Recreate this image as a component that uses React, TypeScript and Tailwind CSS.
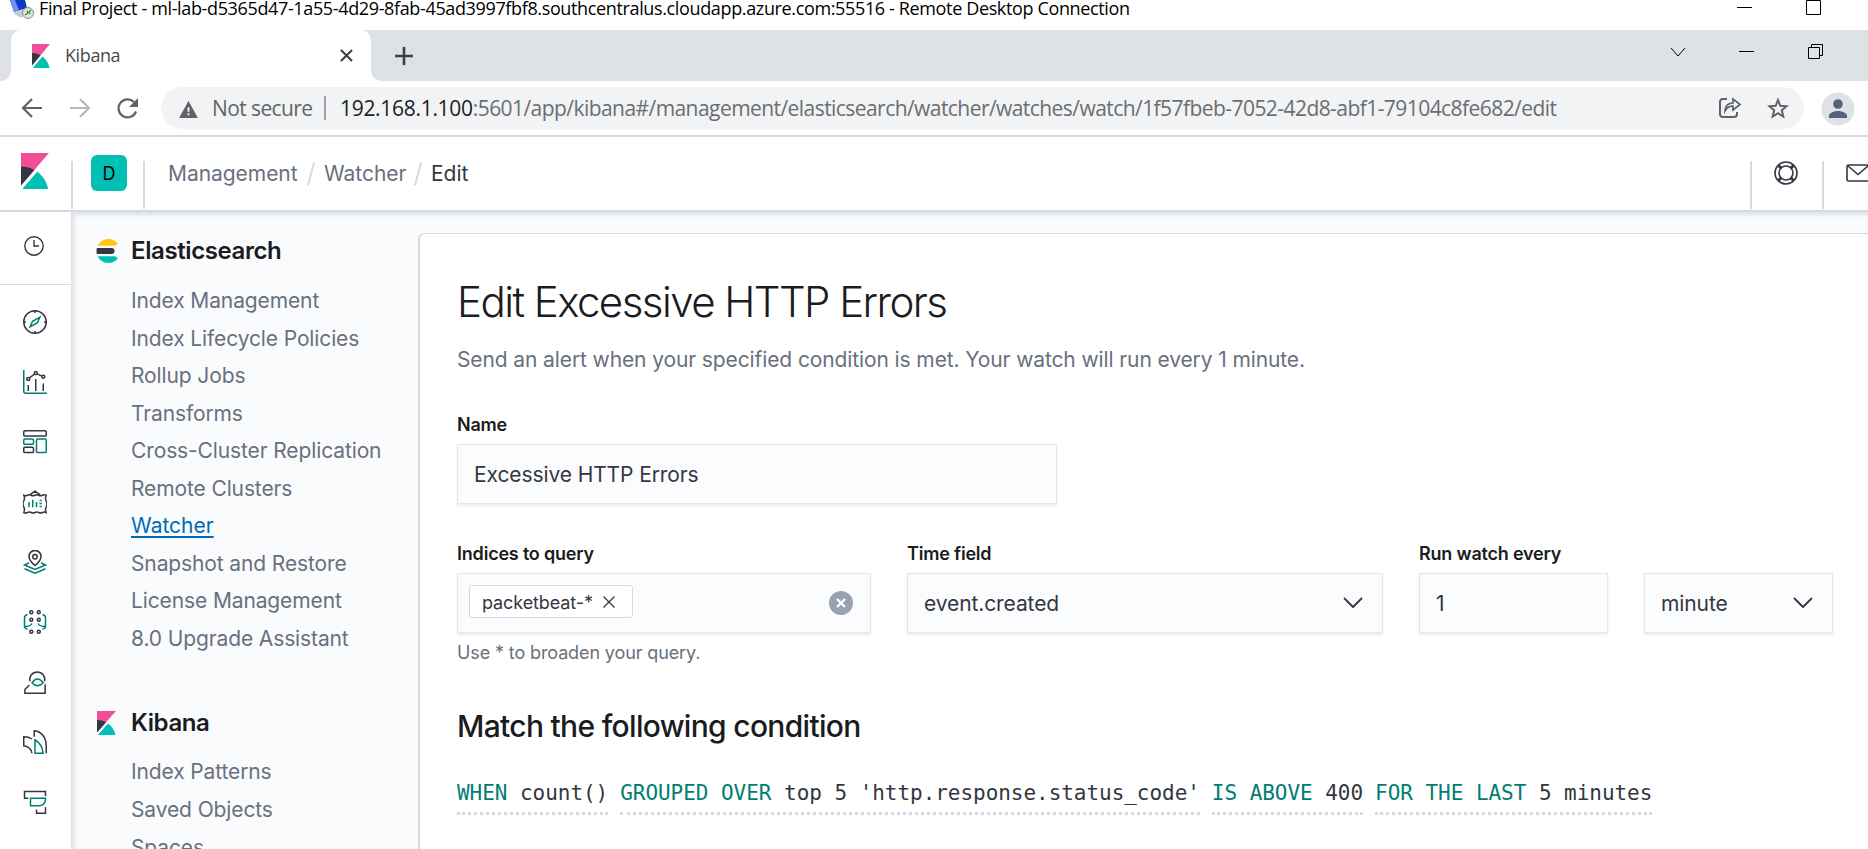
import React from "react";

type P = { className?: string };

const KibanaLogo = ({ className }: P) => (
  <svg viewBox="4 0 25 32" preserveAspectRatio="none" className={className} fill="none">
    <path fill="#F04E98" d="M4 0v28.789L28.935.017z" />
    <path fill="#343741" d="M4 12v16.789l11.906-13.738A24.721 24.721 0 004 12" />
    <path fill="#00BFB3" d="M18.479 16.664L6.268 30.754l-1.073 1.237h23.191c-1.252-6.292-4.883-11.719-9.908-15.327" />
  </svg>
);

const ElasticsearchLogo = ({ className }: P) => (
  <svg viewBox="0 0 32 32" className={className}>
    <path fill="#343741" d="M2 16c0 1.384.194 2.72.524 4H22a4 4 0 000-8H2.524A15.984 15.984 0 002 16" />
    <path fill="#FEC514" d="M28.924 7.662A15.381 15.381 0 0030.48 6C27.547 2.346 23.05 0 18 0 11.679 0 6.239 3.678 3.644 9H25.51a5.039 5.039 0 003.413-1.338" />
    <path fill="#00BFB3" d="M25.51 23H3.645C6.24 28.323 11.679 32 18 32c5.05 0 9.547-2.346 12.48-6a15.381 15.381 0 00-1.556-1.662A5.034 5.034 0 0025.51 23" />
  </svg>
);

const Rail = ({ children }: { children: React.ReactNode }) => (
  <div className="flex h-[60px] items-center justify-center">
    <svg viewBox="0 0 32 32" className="h-6 w-6" fill="none" stroke="#343741" strokeWidth="2">
      {children}
    </svg>
  </div>
);
const T = "#017D73";

const railIcons = [
  <>
    <circle cx="16" cy="16" r="15" />
    <path d="M16 1v3M16 28v3M1 16h3M28 16h3" />
    <path stroke={T} d="M9.500 22.500l3.200-7.500L22.500 9.500l-3.200 7.500z" />
  </>,
  <>
    <path stroke={T} d="M1 0v28a3 3 0 003 3h28" />
    <path d="M7 20v8M17 12v16M27 18v10M8.700 10.600l6.600-5M18.800 5.200l6.400 3" />
    <circle cx="7" cy="12" r="2" />
    <circle cx="17" cy="4" r="2" />
    <circle cx="27" cy="9" r="2" />
  </>,
  <>
    <rect x="1" y="1" width="30" height="7" rx="1.500" />
    <rect stroke={T} x="1" y="12" width="13" height="7" rx="1.500" />
    <rect stroke={T} x="18" y="12" width="13" height="18" rx="1.500" />
    <rect x="1" y="23" width="13" height="7" rx="1.500" />
  </>,
  <>
    <path d="M1 7q2.500 1.500 5 0t5 0 5 0 5 0 5 0 5 0q-2 4 0 7.700t0 7.700 0 7.600q-2.500-1.500-5 0t-5 0-5 0-5 0-5 0-5 0q2-4 0-7.600t0-7.700 0-7.700zM9 6.500L16 1.500l7 5" />
    <path stroke={T} d="M8 16v7M13 13v10M18 16v7M22 14h3M22 18h3M22 22h3" />
  </>,
  <>
    <path d="M16 20.500S8 14 8 8.500a8 8 0 0116 0C24 14 16 20.500 16 20.500z" />
    <circle cx="16" cy="9" r="3" />
    <path stroke={T} d="M8 17l-6 3 14 6 14-6-6-3M2 25l14 6 14-6" />
  </>,
  <>
    <circle cx="11" cy="3" r="2" />
    <circle cx="21" cy="3" r="2" />
    <circle cx="11" cy="13" r="2" />
    <circle cx="21" cy="13" r="2" />
    <circle cx="11" cy="29" r="2" />
    <circle cx="21" cy="29" r="2" />
    <path stroke={T} d="M6 6q-4 1-4 5v12l4 3M2 22q8 0 10-4M26 6q4 1 4 5v12l-4 3M30 22q-8 0-10-4" />
  </>,
  <>
    <path d="M9.300 15a10 10 0 1119.400 0M8.500 20l-6 6v5h27V19" />
    <path stroke={T} d="M12 17q7-10 15 0-8 8-15 0z" />
  </>,
  <>
    <path d="M12 12C9 10 6 9 1 9v12c6 1 10 4 11 10M15 9V1c10 1 16 9 16 21v9" />
    <path stroke={T} d="M16 13c7 4 10 10 11 18H16z" />
  </>,
  <>
    <path d="M7 11H2V2h28v6M18 26v5h12v-8" />
    <path stroke={T} d="M10 11h20v2q-1 8-9 8H10z" />
  </>,
];

const links = [
  "Index Management",
  "Index Lifecycle Policies",
  "Rollup Jobs",
  "Transforms",
  "Cross-Cluster Replication",
  "Remote Clusters",
  "Watcher",
  "Snapshot and Restore",
  "License Management",
  "8.0 Upgrade Assistant",
];

const NavLink = ({ label }: { label: string }) => (
  <a
    className={
      label === "Watcher"
        ? "block h-[37.550px] text-[21px] leading-[37.550px] text-[#006BB4] underline decoration-2 underline-offset-[3px]"
        : "block h-[37.550px] text-[21px] leading-[37.550px] tracking-[-0.12px] text-[#69707D]"
    }
  >
    {label}
  </a>
);

const Chevron = ({ className }: P) => (
  <svg viewBox="0 0 20 12" className={className} fill="none" stroke="#343741" strokeWidth="1.800" strokeLinecap="round" strokeLinejoin="round">
    <path d="M1.500 1.500L10 10l8.500-8.500" />
  </svg>
);

const box =
  "flex h-[60px] items-center border-[1.500px] border-[#E3E6EF] bg-[#FBFCFD] pt-[2px] text-[21px] tracking-[-0.1px] text-[#343741] shadow-[0_2px_3px_rgba(152,162,179,0.2)]";
const label = "h-[23px] text-[18px] font-semibold leading-[23px] tracking-[-0.2px] text-[#1A1C21]";

const Expr = ({ k, v }: { k: string; v: string }) => (
  <span className="h-[37px] whitespace-pre border-b-[3px] border-dotted border-[#D3DAE6] text-[#343741]">
    <span className="text-[#017D73]">{k}</span> {v}
  </span>
);

export default function App() {
  return (
    <div className="flex h-[849px] w-[1868px] flex-col overflow-hidden bg-white font-['Inter',sans-serif]">
      {/* Remote desktop title bar */}
      <div className="flex h-[30px] shrink-0 items-start font-['Open_Sans',sans-serif] text-black">
        <svg viewBox="0 0 24 20" className="ml-[10px] h-5 w-6">
          <path fill="#1238c9" d="M0 0h15l2 8-13 4z" />
          <path fill="#6f93f3" d="M0 0h5l4 10-5 2z" />
          <path fill="#c9ccd2" d="M3 13l12-4 3 3-7 6z" />
          <circle cx="18" cy="13" r="5.500" fill="#dfe3df" stroke="#8b918b" />
          <path d="M15 15l3-2-1-2M21 10l-2 2 1 2" stroke="#2d9a3a" strokeWidth="1.300" fill="none" />
        </svg>
        <span className="ml-[5px] mt-[-4px] w-[1200px] whitespace-nowrap text-[18px] leading-[25px] tracking-[-0.36px]">
          Final Project - ml-lab-d5365d47-1a55-4d29-8fab-45ad3997fbf8.southcentralus.cloudapp.azure.com:55516 - Remote Desktop Connection
        </span>
        <svg viewBox="0 0 100 16" className="ml-auto mr-[40px] h-4 w-[100px]" fill="none" stroke="#000">
          <path d="M9 7.500h15M78.500 .5h14v14h-14z" />
        </svg>
      </div>

      {/* Tab strip */}
      <div className="flex h-[51px] shrink-0 bg-[#DEE1E6]">
        <div className="flex w-[11px] bg-white">
          <div className="w-full rounded-br-[10px] bg-[#DEE1E6]" />
        </div>
        <div className="flex bg-[#DEE1E6]">
          <div className="flex h-[51px] w-[360px] items-center rounded-t-[10px] bg-white pl-[21px]">
            <KibanaLogo className="h-6 w-[18px]" />
            <span className="ml-[15px] w-[250px] font-['Open_Sans',sans-serif] text-[18px] tracking-[-0.4px] text-[#45494d]">Kibana</span>
            <svg viewBox="0 0 14 14" className="ml-[25px] h-[13px] w-[13px]" stroke="#3c4043" strokeWidth="2.200">
              <path d="M1 1l12 12M13 1L1 13" />
            </svg>
          </div>
        </div>
        <div className="flex w-[11px] bg-white">
          <div className="w-full rounded-bl-[10px] bg-[#DEE1E6]" />
        </div>
        <svg viewBox="0 0 18 18" className="ml-[13px] mt-[17px] h-[18px] w-[18px]" stroke="#3c4043" strokeWidth="2.600">
          <path d="M9 0v18M0 9h18" />
        </svg>
        <svg viewBox="0 0 160 20" className="ml-auto mr-[43px] mt-3 h-5 w-[160px]" fill="none" stroke="#000">
          <path d="M6 6l7 8 7-8M74 9.500h15M143.500 5.500h11v11h-11zM146.500 5.500v-3h11v11h-3" />
        </svg>
      </div>

      {/* Address bar */}
      <div className="flex h-[56px] shrink-0 items-center border-b-2 border-[#DADADA] font-['Open_Sans',sans-serif]">
        <svg viewBox="0 0 120 24" className="ml-5 h-6 w-[120px]" fill="none" stroke="#5F6368" strokeWidth="2.200">
          <path d="M22 12H3M12 3l-9 9 9 9" />
          <path stroke="#B7B9BC" d="M50 12h19M60 3l9 9-9 9" />
          <path d="M116 15.500a9 9 0 11-2-9.500" />
          <path fill="#5F6368" stroke="none" d="M118 2v9h-9z" />
        </svg>
        <div className="ml-[21px] flex h-[42px] w-[1643px] items-center rounded-full bg-[#F1F3F4] text-[21px]">
          <svg viewBox="0 0 20 18" className="ml-[18px] mt-[2px] h-[17px] w-[19px]">
            <path fill="#5F6368" d="M10 0l10 18H0z" />
            <path stroke="#F1F3F4" strokeWidth="2" d="M10 6.500v5M10 13v2" />
          </svg>
          <span className="ml-[14px] mt-[2px] w-[100px] whitespace-nowrap tracking-[-0.6px] text-[#5F6368]">Not secure</span>
          <div className="ml-[12px] h-6 w-[2px] bg-[#9AA0A6]" />
          <span className="ml-[14px] mt-[2px] w-[1260px] whitespace-nowrap tracking-[-0.56px] text-[#6A6E72]">
            <span className="tracking-[-0.3px] text-[#202124]">192.168.1.100</span>:5601/app/kibana#/management/elasticsearch/watcher/watches/watch/1f57fbeb-7052-42d8-abf1-79104c8fe682/edit
          </span>
          <svg viewBox="0 0 72 24" className="ml-auto mr-[14px] h-6 w-[72px]" fill="none" stroke="#5F6368" strokeWidth="2">
            <path d="M9 3H5a3 3 0 00-3 3v12a3 3 0 003 3h11a3 3 0 003-3v-2" />
            <path d="M7 15c0-5 3-8 8-8V3l7 5.500-7 5.500v-4c-4 0-6 1.500-8 5z" strokeWidth="1.700" />
            <path d="M60 4l2.300 5.800 6.200.5-4.700 4 1.500 6.200-5.300-3.300-5.300 3.300 1.500-6.200-4.700-4 6.200-.5z" />
          </svg>
        </div>
        <svg viewBox="0 0 34 34" className="ml-[17px] mt-[1px] h-[34px] w-[34px]">
          <circle cx="17" cy="17" r="16.500" fill="#DEE1E6" />
          <circle cx="17" cy="12" r="4.800" fill="#55607A" />
          <path fill="#55607A" d="M8 26v-2c0-3.500 5.500-5 9-5s9 1.500 9 5v2z" />
        </svg>
      </div>

      {/* Application header */}
      <header className="flex h-[75px] shrink-0 border-b-2 border-[#D3DAE6] bg-white">
        <div className="flex w-[71px] pl-[21px] pt-4">
          <KibanaLogo className="h-9 w-[28px]" />
        </div>
        <div className="mt-6 flex h-12 w-[74px] border-x-2 border-[#D3DAE6]">
          <div className="ml-[18px] mt-[-6px] flex h-9 w-9 items-center justify-center rounded-[6px] bg-[#00BFB3] text-[18px] text-black">D</div>
        </div>
        <div className="ml-[23px] mt-[23px] flex h-7 items-center text-[21px] tracking-[-0.05px] text-[#69707D]">
          <span className="w-[130px]">Management</span>
          <div className="mx-3 h-6 w-[2px] rotate-[15deg] bg-[#D3DAE6]" />
          <span className="w-[81px]">Watcher</span>
          <div className="mx-3 h-6 w-[2px] rotate-[15deg] bg-[#D3DAE6]" />
          <span className="text-[#343741]">Edit</span>
        </div>
        <div className="ml-auto mt-6 flex h-12 w-[74px] border-x-2 border-[#D3DAE6]">
          <svg viewBox="0 0 24 24" className="ml-[22px] h-6 w-6" fill="none" stroke="#343741" strokeWidth="1.600">
            <circle cx="12" cy="12" r="11" />
            <circle cx="12" cy="12" r="7" />
            <path strokeWidth="3" d="M4.500 4.500l3 3M19.500 4.500l-3 3M4.500 19.500l3-3M19.500 19.500l-3-3" />
          </svg>
        </div>
        <div className="w-[44px] overflow-hidden pl-[22px] pt-[27px]">
          <svg viewBox="0 0 24 18" className="h-[18px] w-6" fill="none" stroke="#343741" strokeWidth="1.600">
            <rect x="1" y="1" width="22" height="16" rx="1.500" />
            <path d="M1.500 1.500l10.500 9 10.500-9" />
          </svg>
        </div>
      </header>

      <div className="flex min-h-0 flex-1">
        <nav className="flex w-[71px] shrink-0 flex-col">
          <div className="flex h-[73px] shrink-0 border-b border-[#D3DAE6] pl-6 pt-[24px]">
            <svg viewBox="0 0 20 20" className="h-5 w-5" fill="none" stroke="#343741" strokeWidth="1.400">
              <circle cx="10" cy="10" r="9.200" />
              <path d="M10 4v6h5" />
            </svg>
          </div>
          <div className="flex flex-col pr-[1px] pt-[7px]">
            {railIcons.map((icon, i) => (
              <Rail key={i}>{icon}</Rail>
            ))}
          </div>
        </nav>
        <main className="flex min-w-0 flex-1 overflow-hidden bg-[#FAFBFD] shadow-[inset_3px_3px_4px_rgba(152,162,179,0.3)]">
          <aside className="w-[347px] shrink-0 pl-[24px] pt-[21px]">
            <div className="flex h-9 items-center">
              <ElasticsearchLogo className="h-6 w-6" />
              <h2 className="ml-[12px] text-[24px] font-semibold tracking-[-0.4px] text-[#1A1C21]">Elasticsearch</h2>
            </div>
            <div className="pl-[36px] pt-[13px]">
              {links.map((l) => (
                <NavLink key={l} label={l} />
              ))}
            </div>
            <div className="mt-[48px] flex h-9 items-center">
              <KibanaLogo className="ml-[2px] h-6 w-[19px]" />
              <h2 className="ml-[15px] text-[24px] font-semibold tracking-[-0.4px] text-[#1A1C21]">Kibana</h2>
            </div>
            <div className="pl-[36px] pt-[12px]">
              {["Index Patterns", "Saved Objects", "Spaces"].map((l) => (
                <NavLink key={l} label={l} />
              ))}
            </div>
          </aside>
          <section className="mt-[21px] w-[1500px] shrink-0 rounded-tl-[6px] border-l-2 border-t border-[#D3DAE6] bg-white pl-[37px] pt-[40px]">
            <h1 className="h-[56px] whitespace-nowrap text-[42px] font-light leading-[56px] tracking-[-1.550px] text-[#1A1C21]">Edit Excessive HTTP Errors</h1>
            <p className="mt-[15px] h-[30px] text-[21px] leading-[30px] tracking-[-0.11px] text-[#69707D]">
              Send an alert when your specified condition is met. Your watch will run every 1 minute.
            </p>
            <div className="mt-[38px]">
              <div className={label}>Name</div>
              <div className={`${box} mt-[8px] w-[600px] pl-[16px]`}>Excessive HTTP Errors</div>
            </div>
            <div className="mt-[38px] flex gap-9">
              <div className="w-[414px]">
                <div className={label}>Indices to query</div>
                <div className={`${box} mt-[8px] justify-between pl-[11px] pr-[17px]`}>
                  <div className="mt-[-6px] flex h-[33px] w-[164px] items-center rounded-[3px] border border-[#D3DAE6] bg-white pl-3 pt-[3px] text-[18px]">
                    packetbeat-*
                    <svg viewBox="0 0 12 12" className="mb-[2px] ml-[10px] h-3 w-3" stroke="#343741" strokeWidth="1.300">
                      <path d="M.5 .5l11 11M11.500 .5l-11 11" />
                    </svg>
                  </div>
                  <svg viewBox="0 0 24 24" className="mb-[2px] h-6 w-6">
                    <circle cx="12" cy="12" r="12" fill="#98A2B3" />
                    <path d="M8 8l8 8M16 8l-8 8" stroke="#fff" strokeWidth="2.400" />
                  </svg>
                </div>
                <div className="mt-[7px] text-[18px] leading-[25px] tracking-[-0.12px] text-[#69707D]">Use * to broaden your query.</div>
              </div>
              <div className="w-[476px]">
                <div className={label}>Time field</div>
                <div className={`${box} mt-[8px] justify-between pl-4 pr-[19px]`}>
                  event.created
                  <Chevron className="mb-[2px] h-3 w-5" />
                </div>
              </div>
              <div className="w-[189px]">
                <div className={label}>Run watch every</div>
                <div className={`${box} mt-[8px] pl-4`}>1</div>
              </div>
              <div className="w-[189px] pt-[31px]">
                <div className={`${box} justify-between pl-4 pr-[19px]`}>
                  minute
                  <Chevron className="mb-[2px] h-3 w-5" />
                </div>
              </div>
            </div>
            <h2 className="mt-[37px] h-[48px] text-[30px] font-medium leading-[48px] tracking-[-0.69px] text-[#1A1C21]">Match the following condition</h2>
            <div className="mt-[28px] flex gap-3 font-['DejaVu_Sans_Mono',monospace] text-[21px] leading-[30px] tracking-[-0.043px]">
              <Expr k="WHEN" v="count()" />
              <Expr k="GROUPED OVER" v="top 5 'http.response.status_code'" />
              <Expr k="IS ABOVE" v="400" />
              <Expr k="FOR THE LAST" v="5 minutes" />
            </div>
          </section>
        </main>
      </div>
    </div>
  );
}
